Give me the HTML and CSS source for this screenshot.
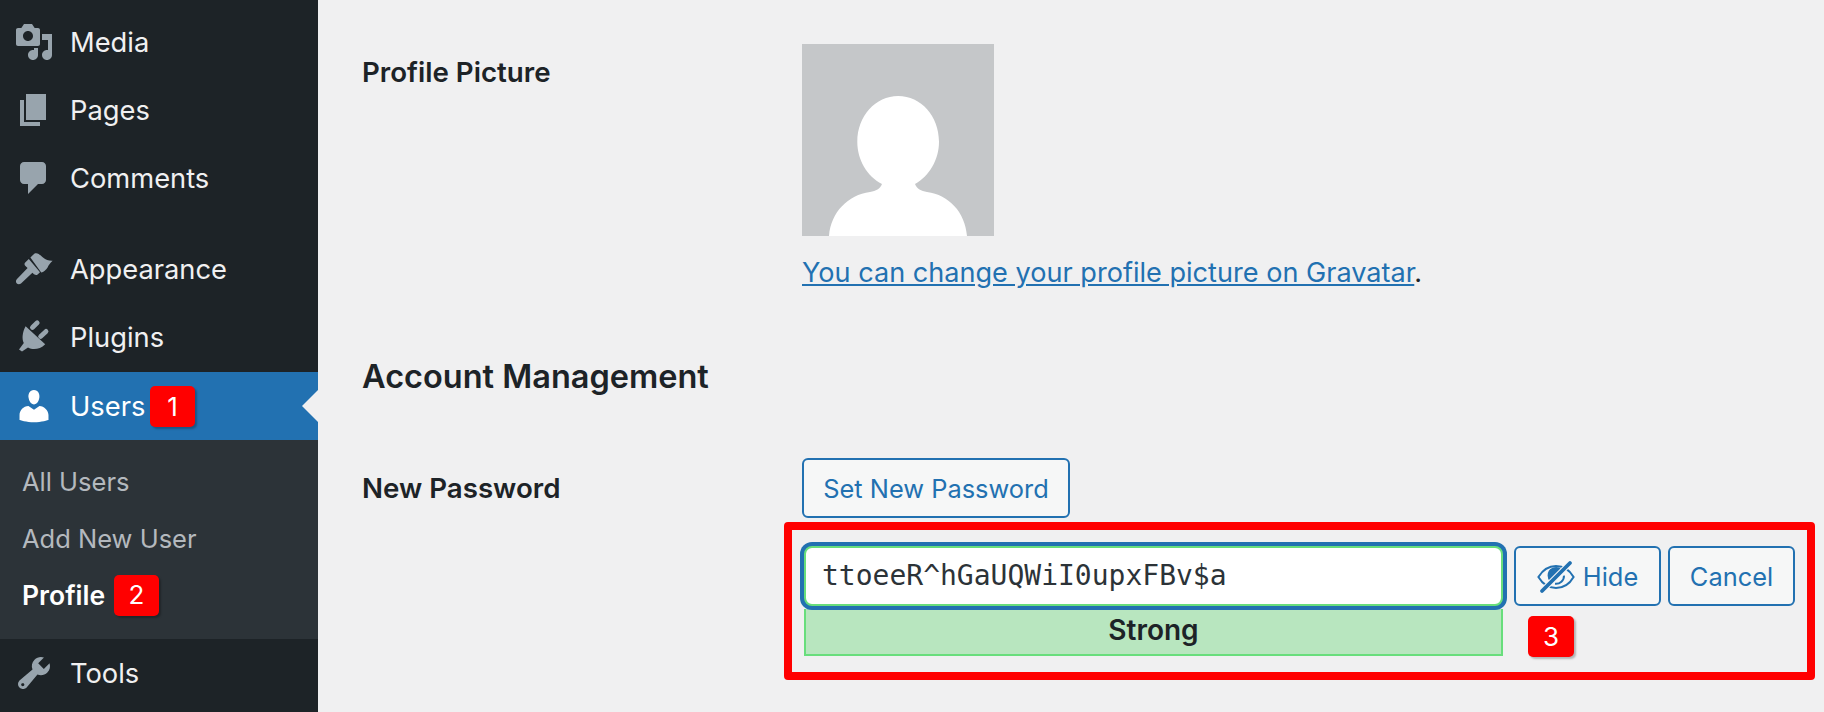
FILE: index.html
```html
<!DOCTYPE html>
<html lang="en">
<head>
<meta charset="utf-8">
<title>Profile</title>
<link rel="stylesheet" href="styles.css">
</head>
<body>
<div class="layout">
  <nav class="sidebar">
    <a class="item"><svg class="icon" viewBox="0 0 20 20"><path d="M13 11V4c0-.55-.45-1-1-1h-1.67L9 1H5L3.67 3H2c-.55 0-1 .45-1 1v7c0 .55.45 1 1 1h10c.55 0 1-.45 1-1zM7 4.5c1.38 0 2.5 1.12 2.5 2.5S8.38 9.5 7 9.5 4.5 8.38 4.5 7 5.62 4.5 7 4.5zM14 6h5v10.5c0 1.38-1.12 2.5-2.5 2.5S14 17.88 14 16.5s1.12-2.5 2.5-2.5c.17 0 .34.02.5.05V9h-3V6zm-4 8.05V13h2v3.5c0 1.38-1.12 2.5-2.5 2.5S7 17.88 7 16.5 8.12 14 9.5 14c.17 0 .34.02.5.05z"/></svg>Media</a>
    <a class="item"><svg class="icon" viewBox="0 0 20 20"><path d="M6 15V2h10v13H6zm-1 1h8v2H3V5h2v11z"/></svg>Pages</a>
    <a class="item"><svg class="icon" viewBox="0 0 20 20"><path d="M5 2h9c1.1 0 2 .9 2 2v7c0 1.1-.9 2-2 2h-2l-5 5v-5H5c-1.1 0-2-.9-2-2V4c0-1.1.9-2 2-2z"/></svg>Comments</a>
    <div class="separator"></div>
    <a class="item"><svg class="icon" viewBox="0 0 20 20"><path d="M8.2 4.2 10.3 2.2C12 1.7 13 3 14.5 4.3 16 5.5 17.5 6 19.3 5.9 18 7.2 17.3 8.2 16.8 9.2 16 10.5 14.8 11.5 13.6 11.7Z"/><path d="M7.4 5 13 11.6 11.8 12.7C11.3 13.2 10.6 13 10 12.6L9.2 11.9 3.5 17.2C2.8 17.8 1.8 17.7 1.3 17.1.8 16.5.9 15.6 1.5 15L6.8 9.5 5.6 8.4C5.2 7.9 5.1 7.3 5.6 6.8Z"/></svg>Appearance</a>
    <a class="item"><svg class="icon" viewBox="0 0 20 20"><path d="M5.8 4.6 15.6 13.6C14 15.3 12 16 10 16 9 16 8 15.7 7 15.2L4 17.3 2.5 16.2 4.9 13C4.4 12 4.2 10.7 4.3 9.5 4.5 7.5 5 6 5.8 4.6Z"/><path class="prong" d="M9.2 5.2 11.6 2.9M13.3 9.7 16 7.2"/></svg>Plugins</a>
    <div class="group">
      <a class="item item-current"><svg class="icon" viewBox="0 0 20 20"><path d="M10 9.25c-2.27 0-2.73-3.44-2.73-3.44C7 4.02 7.82 2 9.97 2c2.16 0 2.98 2.02 2.71 3.81 0 0-.41 3.44-2.68 3.44zm0 2.57L12.72 10c2.39 0 4.52 2.33 4.52 4.53v2.49s-3.65 1.13-7.24 1.13c-3.65 0-7.24-1.13-7.24-1.13v-2.49c0-2.25 1.94-4.48 4.47-4.48z"/></svg>Users<span class="badge badge-users">1</span></a>
      <ul class="submenu">
        <li class="subitem">All Users</li>
        <li class="subitem">Add New User</li>
        <li class="subitem subitem-current">Profile<span class="badge badge-profile">2</span></li>
      </ul>
    </div>
    <a class="item"><svg class="icon" viewBox="0 0 20 20"><path d="M16.68 9.77c-1.34 1.34-3.3 1.67-4.95.99l-5.41 6.52c-.99.99-2.59.99-3.58 0s-.99-2.59 0-3.57l6.52-5.42c-.68-1.65-.35-3.61 1-4.95 1.28-1.28 3.12-1.62 4.72-1.06l-2.89 2.89 2.82 2.82 2.86-2.87c.53 1.58.18 3.39-1.09 4.65zM3.83 16.41c.3.31.8.31 1.11 0 .31-.3.31-.8 0-1.11-.31-.31-.81-.31-1.11 0-.31.31-.31.81 0 1.11z"/></svg>Tools</a>
  </nav>
  <main class="content">
    <section class="row row-picture">
      <div class="label">Profile Picture</div>
      <div class="field">
        <div class="avatar"><svg viewBox="0 0 192 192"><path d="M27 192C29 168 46 151 68 148 74 147 78 145 80 140 65 132 55.3 116 55.3 97.7 55.3 72 73.5 52 96.2 52 119 52 137 72 137 97.7 137 116 127 132 113 140 115 145 119 147 125 148 147 151 163 168 165 192Z" fill="#fff"/></svg></div>
        <p class="gravatar"><a class="link">You can change your profile picture on Gravatar</a>.</p>
      </div>
    </section>
    <h2 class="heading">Account Management</h2>
    <section class="row row-password">
      <div class="label">New Password</div>
      <div class="field">
        <button class="button button-set">Set New Password</button>
        <div class="password-row">
          <div class="password-col">
            <div class="password-input">ttoeeR^hGaUQWiI0upxFBv$a</div>
            <div class="strength">Strong</div>
          </div>
          <button class="button button-hide"><svg class="eye" viewBox="0 0 20 20"><path class="eye-line" d="M1.2 10.5C3.5 6.7 6.5 5 10 5 13.5 5 16.6 6.7 18.8 10.5 16.6 14.3 13.5 16 10 16 6.5 16 3.5 14.3 1.2 10.5Z"/><path class="eye-fill" d="M5.8 9.8A4.2 4.2 0 0 1 12.9 6.7L7 12.8A4.2 4.2 0 0 1 5.8 9.8Z"/><path class="eye-line" d="M14 9.8A4 4 0 0 1 9.5 13.9"/><path class="eye-gap" d="M17 3.5 3 17.5"/><path class="eye-slash" d="M17 3.5 3 17.5"/></svg>Hide</button>
          <button class="button button-cancel">Cancel</button>
          <span class="badge badge-password">3</span>
        </div>
      </div>
    </section>
    <div class="highlight"></div>
  </main>
</div>
</body>
</html>
```
FILE: styles.css
```css
* { box-sizing: border-box; }
html, body { margin: 0; height: 712px; overflow: hidden; }
body { background: #f0f0f1; color: #1d2327; font-family: Inter, "Liberation Sans", sans-serif; font-size: 27.1px; }
.layout { display: flex; height: 712px; }

.sidebar { width: 318px; flex: none; background: #1d2327; padding-top: 8px; }
.item { position: relative; display: flex; align-items: center; height: 68px; padding-left: 14px; color: #f0f0f1; font-size: 27.3px; }
.icon { width: 40px; height: 40px; margin-right: 16px; fill: #98a4ad; flex: none; }
.prong { fill: none; stroke: #98a4ad; stroke-width: 2.4; stroke-linecap: round; }
.separator { height: 23px; }
.group { margin-top: 1px; }
.item-current { background: #2271b1; color: #fff; }
.item-current .icon { fill: #fff; }
.item-current::after { content: ""; position: absolute; right: 0; top: 18px; border-style: solid; border-color: transparent #f0f0f1 transparent transparent; border-width: 16px 16px 16px 0; }
.submenu { list-style: none; margin: 0; height: 199px; padding: 14px 0 0; background: #2c3338; }
.subitem { height: 56.5px; line-height: 56.5px; padding-left: 22px; font-size: 25.5px; color: #b4b9be; position: relative; }
.subitem-current { color: #fff; font-weight: 600; font-size: 26.5px; }

.badge { position: absolute; display: flex; align-items: center; justify-content: center; width: 45px; height: 41px; border-radius: 5px; background: #f00; color: #fff; font-weight: 400; font-size: 26px; box-shadow: 2px 2px 2px rgba(0,0,0,.25); }
.badge-users { left: 150px; top: 14px; }
.badge-profile { left: 114px; top: 8px; }
.badge-password { left: 724px; top: 70px; width: 46px; }

.content { position: relative; flex: 1; padding: 44px 0 0 44px; }
.row { display: flex; }
.label { width: 440px; flex: none; font-weight: 600; font-size: 27.7px; line-height: 32px; padding-top: 12px; }
.field { flex: 1; min-width: 0; }
.avatar { width: 192px; height: 192px; background: #c5c7c9; }
.avatar svg { display: block; width: 192px; height: 192px; }
.gravatar { margin: 20px 0 0; line-height: 34px; }
.link { color: #2271b1; text-decoration: underline; }
.heading { margin: 67px 0 0; font-size: 32.5px; line-height: 40px; font-weight: 600; }
.row-password { margin-top: 61px; }
.row-password .label { padding-top: 14px; }
.button { display: flex; align-items: center; justify-content: center; height: 60px; padding: 0; font-family: inherit; font-size: 25.4px; color: #2271b1; background: #f6f7f7; border: 2px solid #2271b1; border-radius: 6px; }
.button-set { width: 268px; }
.password-row { position: relative; display: flex; align-items: flex-start; margin-top: 28px; margin-left: 2px; }
.password-col { width: 699px; flex: none; }
.password-input { height: 60px; line-height: 56px; padding-left: 16px; background: #fff; border: 2px solid #68de7c; border-radius: 8px; box-shadow: 0 0 0 4px #2271b1; font-family: "DejaVu Sans Mono", monospace; font-size: 28px; color: #2c3338; position: relative; }
.strength { height: 47px; margin-top: 3px; background: #b8e6bf; border: 2px solid #68de7c; border-top: 0; text-align: center; font-weight: 600; font-size: 28px; line-height: 42px; }
.button-hide { width: 147px; margin-left: 11px; }
.button-cancel { width: 127px; margin-left: 7px; }
.eye { width: 40px; height: 40px; margin-right: 7px; margin-left: -1px; }
.eye-line { fill: none; stroke: #2271b1; stroke-width: 1; }
.eye-fill { fill: #2271b1; }
.eye-gap { fill: none; stroke: #f6f7f7; stroke-width: 3; }
.eye-slash { stroke: #2271b1; stroke-width: 1.9; stroke-linecap: round; fill: none; }
.highlight { position: absolute; left: 466px; top: 522px; width: 1031px; height: 158px; border: 8px solid #f00; border-radius: 4px; }
```
